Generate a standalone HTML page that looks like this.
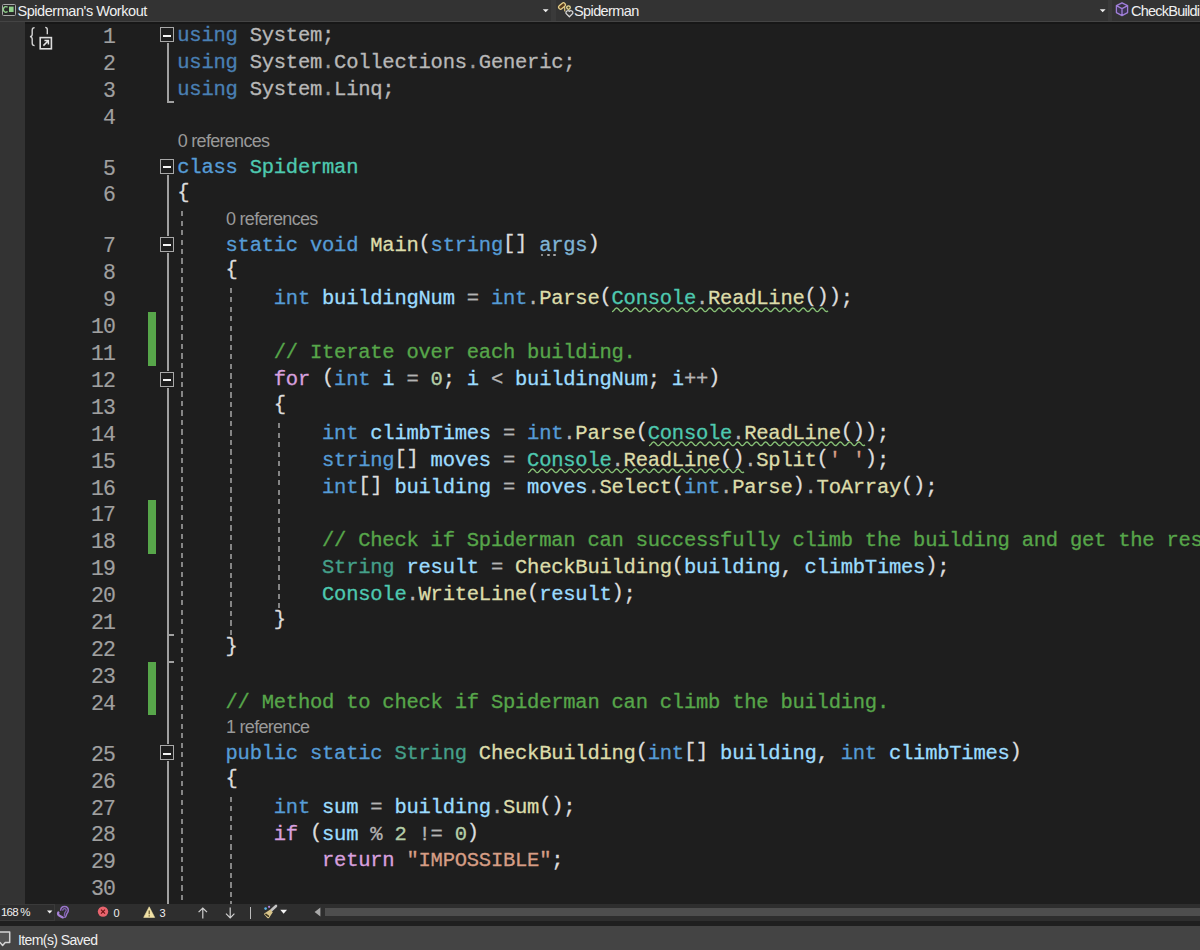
<!DOCTYPE html>
<html><head><meta charset="utf-8"><style>
*{margin:0;padding:0;box-sizing:border-box}
html,body{width:1200px;height:950px;overflow:hidden;background:#1e1e1e}
body{position:relative;font-family:"Liberation Sans",sans-serif}
.a{position:absolute}
.code{position:absolute;left:177.30px;font-family:"Liberation Mono",monospace;font-size:20.50px;letter-spacing:-0.240px;white-space:pre;line-height:26.90px;height:26.90px;-webkit-text-stroke:0.30px currentColor}
.ln{position:absolute;left:59px;width:56.00px;text-align:right;font-family:"Liberation Mono",monospace;font-size:21.50px;letter-spacing:-0.840px;white-space:pre;line-height:26.90px;color:#a0a0a0;-webkit-text-stroke:0.15px currentColor}
.cl{position:absolute;font-family:"Liberation Sans",sans-serif;font-size:18px;color:#999999;white-space:pre;letter-spacing:-0.7px;line-height:20px;height:20px}
.k{color:#569CD6}.c{color:#D8A0DF}.t{color:#4EC9B0}.m{color:#DCDCAA}.v{color:#9CDCFE}.s{color:#D69D85}.n{color:#B5CEA8}.g{color:#57A64A}.p{color:#DCDCDC}.o{color:#B4B4B4}.ns{color:#DCDCDC}.pa{color:#80b4d4}.tf{color:#45a08a}
.br{position:relative;top:-2px}
.u .k{color:#4a80b4}.u .ns,.u .p{color:#b8b8b8}.u .o{color:#9a9a9a}
.fold{position:absolute;left:159.6px;width:14.6px;height:15px;border:1.8px solid #a8a8a8;background:#1e1e1e}
.fold:after{content:"";position:absolute;left:2.2px;top:6.4px;width:8.2px;height:2px;background:#f4f4f4}
.vl{position:absolute;left:167px;width:2px;background:#a0a0a0}
.tick{position:absolute;left:167px;width:7px;height:2px;background:#a0a0a0}
.gb{position:absolute;left:148px;width:8px;background:#57A64A}
.guide{position:absolute;width:2px;background:repeating-linear-gradient(to bottom,#858585 0,#858585 5px,transparent 5px,transparent 9.5px)}
</style></head><body>

<div class="a" style="left:0;top:22px;width:25px;height:882px;background:#333333"></div>
<div class="ln" style="top:23.83px">1</div>
<div class="code u" style="top:22.99px"><span class="k">using</span><span class="p"> </span><span class="ns">System</span><span class="p">;</span></div>
<div class="ln" style="top:50.73px">2</div>
<div class="code u" style="top:49.89px"><span class="k">using</span><span class="p"> </span><span class="ns">System</span><span class="o">.</span><span class="ns">Collections</span><span class="o">.</span><span class="ns">Generic</span><span class="p">;</span></div>
<div class="ln" style="top:77.63px">3</div>
<div class="code u" style="top:76.79px"><span class="k">using</span><span class="p"> </span><span class="ns">System</span><span class="o">.</span><span class="ns">Linq</span><span class="p">;</span></div>
<div class="ln" style="top:104.53px">4</div>
<div class="ln" style="top:155.53px">5</div>
<div class="code" style="top:154.69px"><span class="k">class</span><span class="p"> </span><span class="t">Spiderman</span></div>
<div class="cl" style="left:177.70px;top:130.96px">0 references</div>
<div class="ln" style="top:182.43px">6</div>
<div class="code" style="top:181.59px"><span class="p"><span class="br">{</span></span></div>
<div class="ln" style="top:233.43px">7</div>
<div class="code" style="top:232.59px"><span class="p">    </span><span class="k">static</span><span class="p"> </span><span class="k">void</span><span class="p"> </span><span class="m">Main</span><span class="p"><span class="br">(</span></span><span class="k">string</span><span class="p"><span class="br">[</span><span class="br">]</span> </span><span class="pa">args</span><span class="p"><span class="br">)</span></span></div>
<div class="cl" style="left:225.94px;top:208.86px">0 references</div>
<div class="ln" style="top:260.33px">8</div>
<div class="code" style="top:259.49px"><span class="p">    <span class="br">{</span></span></div>
<div class="ln" style="top:287.23px">9</div>
<div class="code" style="top:286.39px"><span class="p">        </span><span class="k">int</span><span class="p"> </span><span class="v">buildingNum</span><span class="p"> </span><span class="o">=</span><span class="p"> </span><span class="k">int</span><span class="o">.</span><span class="m">Parse</span><span class="p"><span class="br">(</span></span><span class="t">Console</span><span class="o">.</span><span class="m">ReadLine</span><span class="p"><span class="br">(</span><span class="br">)</span><span class="br">)</span>;</span></div>
<div class="ln" style="top:314.13px">10</div>
<div class="ln" style="top:341.03px">11</div>
<div class="code" style="top:340.19px"><span class="p">        </span><span class="g">// Iterate over each building.</span></div>
<div class="ln" style="top:367.93px">12</div>
<div class="code" style="top:367.09px"><span class="p">        </span><span class="c">for</span><span class="p"> <span class="br">(</span></span><span class="k">int</span><span class="p"> </span><span class="v">i</span><span class="p"> </span><span class="o">=</span><span class="p"> </span><span class="n">0</span><span class="p">; </span><span class="v">i</span><span class="p"> </span><span class="o">&lt;</span><span class="p"> </span><span class="v">buildingNum</span><span class="p">; </span><span class="v">i</span><span class="o">++</span><span class="p"><span class="br">)</span></span></div>
<div class="ln" style="top:394.83px">13</div>
<div class="code" style="top:393.99px"><span class="p">        <span class="br">{</span></span></div>
<div class="ln" style="top:421.73px">14</div>
<div class="code" style="top:420.89px"><span class="p">            </span><span class="k">int</span><span class="p"> </span><span class="v">climbTimes</span><span class="p"> </span><span class="o">=</span><span class="p"> </span><span class="k">int</span><span class="o">.</span><span class="m">Parse</span><span class="p"><span class="br">(</span></span><span class="t">Console</span><span class="o">.</span><span class="m">ReadLine</span><span class="p"><span class="br">(</span><span class="br">)</span><span class="br">)</span>;</span></div>
<div class="ln" style="top:448.63px">15</div>
<div class="code" style="top:447.79px"><span class="p">            </span><span class="k">string</span><span class="p"><span class="br">[</span><span class="br">]</span> </span><span class="v">moves</span><span class="p"> </span><span class="o">=</span><span class="p"> </span><span class="t">Console</span><span class="o">.</span><span class="m">ReadLine</span><span class="p"><span class="br">(</span><span class="br">)</span></span><span class="o">.</span><span class="m">Split</span><span class="p"><span class="br">(</span></span><span class="s">&#x27; &#x27;</span><span class="p"><span class="br">)</span>;</span></div>
<div class="ln" style="top:475.53px">16</div>
<div class="code" style="top:474.69px"><span class="p">            </span><span class="k">int</span><span class="p"><span class="br">[</span><span class="br">]</span> </span><span class="v">building</span><span class="p"> </span><span class="o">=</span><span class="p"> </span><span class="v">moves</span><span class="o">.</span><span class="m">Select</span><span class="p"><span class="br">(</span></span><span class="k">int</span><span class="o">.</span><span class="m">Parse</span><span class="p"><span class="br">)</span></span><span class="o">.</span><span class="m">ToArray</span><span class="p"><span class="br">(</span><span class="br">)</span>;</span></div>
<div class="ln" style="top:502.43px">17</div>
<div class="ln" style="top:529.33px">18</div>
<div class="code" style="top:528.49px"><span class="p">            </span><span class="g">// Check if Spiderman can successfully climb the building and get the result.</span></div>
<div class="ln" style="top:556.23px">19</div>
<div class="code" style="top:555.39px"><span class="p">            </span><span class="tf">String</span><span class="p"> </span><span class="v">result</span><span class="p"> </span><span class="o">=</span><span class="p"> </span><span class="m">CheckBuilding</span><span class="p"><span class="br">(</span></span><span class="v">building</span><span class="p">, </span><span class="v">climbTimes</span><span class="p"><span class="br">)</span>;</span></div>
<div class="ln" style="top:583.13px">20</div>
<div class="code" style="top:582.29px"><span class="p">            </span><span class="t">Console</span><span class="o">.</span><span class="m">WriteLine</span><span class="p"><span class="br">(</span></span><span class="v">result</span><span class="p"><span class="br">)</span>;</span></div>
<div class="ln" style="top:610.03px">21</div>
<div class="code" style="top:609.19px"><span class="p">        <span class="br">}</span></span></div>
<div class="ln" style="top:636.93px">22</div>
<div class="code" style="top:636.09px"><span class="p">    <span class="br">}</span></span></div>
<div class="ln" style="top:663.83px">23</div>
<div class="ln" style="top:690.73px">24</div>
<div class="code" style="top:689.89px"><span class="p">    </span><span class="g">// Method to check if Spiderman can climb the building.</span></div>
<div class="ln" style="top:741.73px">25</div>
<div class="code" style="top:740.89px"><span class="p">    </span><span class="k">public</span><span class="p"> </span><span class="k">static</span><span class="p"> </span><span class="tf">String</span><span class="p"> </span><span class="m">CheckBuilding</span><span class="p"><span class="br">(</span></span><span class="k">int</span><span class="p"><span class="br">[</span><span class="br">]</span> </span><span class="v">building</span><span class="p">, </span><span class="k">int</span><span class="p"> </span><span class="v">climbTimes</span><span class="p"><span class="br">)</span></span></div>
<div class="cl" style="left:225.94px;top:717.16px">1 reference</div>
<div class="ln" style="top:768.63px">26</div>
<div class="code" style="top:767.79px"><span class="p">    <span class="br">{</span></span></div>
<div class="ln" style="top:795.53px">27</div>
<div class="code" style="top:794.69px"><span class="p">        </span><span class="k">int</span><span class="p"> </span><span class="v">sum</span><span class="p"> </span><span class="o">=</span><span class="p"> </span><span class="v">building</span><span class="o">.</span><span class="m">Sum</span><span class="p"><span class="br">(</span><span class="br">)</span>;</span></div>
<div class="ln" style="top:822.43px">28</div>
<div class="code" style="top:821.59px"><span class="p">        </span><span class="c">if</span><span class="p"> <span class="br">(</span></span><span class="v">sum</span><span class="p"> </span><span class="o">%</span><span class="p"> </span><span class="n">2</span><span class="p"> </span><span class="o">!=</span><span class="p"> </span><span class="n">0</span><span class="p"><span class="br">)</span></span></div>
<div class="ln" style="top:849.33px">29</div>
<div class="code" style="top:848.49px"><span class="p">            </span><span class="c">return</span><span class="p"> </span><span class="s">&quot;IMPOSSIBLE&quot;</span><span class="p">;</span></div>
<div class="ln" style="top:876.23px">30</div>
<div class="fold" style="top:27.40px"></div>
<div class="fold" style="top:159.10px"></div>
<div class="fold" style="top:237.00px"></div>
<div class="fold" style="top:371.50px"></div>
<div class="fold" style="top:745.30px"></div>
<div class="gb" style="top:312.00px;height:53.80px"></div>
<div class="gb" style="top:500.30px;height:53.80px"></div>
<div class="gb" style="top:661.70px;height:53.80px"></div>
<div class="vl" style="top:43.40px;height:59.00px"></div>
<div class="tick" style="top:101.40px"></div>
<div class="vl" style="top:175.10px;height:60.90px"></div>
<div class="vl" style="top:253.00px;height:117.50px"></div>
<div class="vl" style="top:387.50px;height:356.80px"></div>
<div class="tick" style="top:633.80px"></div>
<div class="tick" style="top:660.70px"></div>
<div class="vl" style="top:761.30px;height:142.70px"></div>
<div class="guide" style="left:181.10px;top:210.50px;height:693.50px"></div>
<div class="guide" style="left:230.10px;top:288.00px;height:346.80px"></div>
<div class="guide" style="left:277.90px;top:422.50px;height:185.40px"></div>
<div class="guide" style="left:230.10px;top:796.70px;height:107.30px"></div>
<svg class="a" style="left:611.46px;top:306.80px" width="220" height="8"><polyline points="1.00,4.60 1.50,4.50 2.00,4.21 2.50,3.76 3.00,3.20 3.50,2.60 4.00,2.02 4.50,1.53 5.00,1.18 5.50,1.01 6.00,1.05 6.50,1.28 7.00,1.68 7.50,2.21 8.00,2.80 8.50,3.40 9.00,3.92 9.50,4.33 10.00,4.56 10.50,4.59 11.00,4.42 11.50,4.07 12.00,3.58 12.50,3.00 13.00,2.39 13.50,1.84 14.00,1.39 14.50,1.10 15.00,1.00 15.50,1.10 16.00,1.40 16.50,1.85 17.00,2.41 17.50,3.01 18.00,3.59 18.50,4.08 19.00,4.43 19.50,4.59 20.00,4.55 20.50,4.32 21.00,3.92 21.50,3.39 22.00,2.79 22.50,2.20 23.00,1.67 23.50,1.27 24.00,1.04 24.50,1.01 25.00,1.18 25.50,1.53 26.00,2.03 26.50,2.61 27.00,3.21 27.50,3.77 28.00,4.21 28.50,4.50 29.00,4.60 29.50,4.49 30.00,4.20 30.50,3.75 31.00,3.19 31.50,2.59 32.00,2.01 32.50,1.52 33.00,1.17 33.50,1.01 34.00,1.05 34.50,1.28 35.00,1.69 35.50,2.22 36.00,2.82 36.50,3.41 37.00,3.93 37.50,4.33 38.00,4.56 38.50,4.59 39.00,4.41 39.50,4.06 40.00,3.57 40.50,2.98 41.00,2.38 41.50,1.83 42.00,1.38 42.50,1.10 43.00,1.00 43.50,1.11 44.00,1.40 44.50,1.86 45.00,2.42 45.50,3.02 46.00,3.60 46.50,4.09 47.00,4.43 47.50,4.59 48.00,4.55 48.50,4.31 49.00,3.91 49.50,3.37 50.00,2.78 50.50,2.19 51.00,1.66 51.50,1.26 52.00,1.04 52.50,1.01 53.00,1.19 53.50,1.54 54.00,2.04 54.50,2.62 55.00,3.22 55.50,3.78 56.00,4.22 56.50,4.51 57.00,4.60 57.50,4.49 58.00,4.19 58.50,3.74 59.00,3.18 59.50,2.57 60.00,2.00 60.50,1.51 61.00,1.17 61.50,1.01 62.00,1.05 62.50,1.29 63.00,1.70 63.50,2.23 64.00,2.83 64.50,3.42 65.00,3.94 65.50,4.34 66.00,4.56 66.50,4.59 67.00,4.41 67.50,4.05 68.00,3.55 68.50,2.97 69.00,2.37 69.50,1.82 70.00,1.37 70.50,1.09 71.00,1.00 71.50,1.11 72.00,1.41 72.50,1.87 73.00,2.43 73.50,3.03 74.00,3.61 74.50,4.10 75.00,4.44 75.50,4.59 76.00,4.55 76.50,4.31 77.00,3.90 77.50,3.36 78.00,2.77 78.50,2.17 79.00,1.65 79.50,1.26 80.00,1.04 80.50,1.02 81.00,1.19 81.50,1.55 82.00,2.05 82.50,2.63 83.00,3.24 83.50,3.79 84.00,4.23 84.50,4.51 85.00,4.60 85.50,4.49 86.00,4.18 86.50,3.73 87.00,3.16 87.50,2.56 88.00,1.99 88.50,1.50 89.00,1.16 89.50,1.01 90.00,1.05 90.50,1.30 91.00,1.71 91.50,2.24 92.00,2.84 92.50,3.43 93.00,3.95 93.50,4.35 94.00,4.56 94.50,4.58 95.00,4.40 95.50,4.04 96.00,3.54 96.50,2.96 97.00,2.36 97.50,1.81 98.00,1.37 98.50,1.09 99.00,1.00 99.50,1.12 100.00,1.42 100.50,1.88 101.00,2.44 101.50,3.04 102.00,3.62 102.50,4.10 103.00,4.44 103.50,4.59 104.00,4.54 104.50,4.30 105.00,3.89 105.50,3.35 106.00,2.75 106.50,2.16 107.00,1.64 107.50,1.25 108.00,1.04 108.50,1.02 109.00,1.20 109.50,1.56 110.00,2.06 110.50,2.65 111.00,3.25 111.50,3.80 112.00,4.24 112.50,4.51 113.00,4.60 113.50,4.48 114.00,4.18 114.50,3.72 115.00,3.15 115.50,2.55 116.00,1.97 116.50,1.49 117.00,1.16 117.50,1.01 118.00,1.06 118.50,1.30 119.00,1.72 119.50,2.25 120.00,2.85 120.50,3.44 121.00,3.96 121.50,4.35 122.00,4.57 122.50,4.58 123.00,4.40 123.50,4.03 124.00,3.53 124.50,2.95 125.00,2.35 125.50,1.80 126.00,1.36 126.50,1.08 127.00,1.00 127.50,1.12 128.00,1.43 128.50,1.89 129.00,2.45 129.50,3.06 130.00,3.63 130.50,4.11 131.00,4.45 131.50,4.59 132.00,4.54 132.50,4.29 133.00,3.88 133.50,3.34 134.00,2.74 134.50,2.15 135.00,1.63 135.50,1.25 136.00,1.03 136.50,1.02 137.00,1.20 137.50,1.57 138.00,2.07 138.50,2.66 139.00,3.26 139.50,3.81 140.00,4.24 140.50,4.52 141.00,4.60 141.50,4.48 142.00,4.17 142.50,3.71 143.00,3.14 143.50,2.54 144.00,1.96 144.50,1.48 145.00,1.15 145.50,1.01 146.00,1.06 146.50,1.31 147.00,1.73 147.50,2.27 148.00,2.86 148.50,3.45 149.00,3.97 149.50,4.36 150.00,4.57 150.50,4.58 151.00,4.39 151.50,4.03 152.00,3.52 152.50,2.94 153.00,2.34 153.50,1.79 154.00,1.35 154.50,1.08 155.00,1.00 155.50,1.12 156.00,1.44 156.50,1.90 157.00,2.47 157.50,3.07 158.00,3.64 158.50,4.12 159.00,4.45 159.50,4.60 160.00,4.54 160.50,4.29 161.00,3.87 161.50,3.33 162.00,2.73 162.50,2.14 163.00,1.62 163.50,1.24 164.00,1.03 164.50,1.02 165.00,1.21 165.50,1.58 166.00,2.08 166.50,2.67 167.00,3.27 167.50,3.82 168.00,4.25 168.50,4.52 169.00,4.60 169.50,4.47 170.00,4.16 170.50,3.69 171.00,3.13 171.50,2.53 172.00,1.95 172.50,1.48 173.00,1.15 173.50,1.00 174.00,1.06 174.50,1.32 175.00,1.74 175.50,2.28 176.00,2.88 176.50,3.47 177.00,3.98 177.50,4.36 178.00,4.57 178.50,4.58 179.00,4.39 179.50,4.02 180.00,3.51 180.50,2.92 181.00,2.32 181.50,1.78 182.00,1.35 182.50,1.08 183.00,1.00 183.50,1.13 184.00,1.44 184.50,1.91 185.00,2.48 185.50,3.08 186.00,3.65 186.50,4.13 187.00,4.46 187.50,4.60 188.00,4.54 188.50,4.28 189.00,3.86 189.50,3.32 190.00,2.72 190.50,2.13 191.00,1.61 191.50,1.23 192.00,1.03 192.50,1.02 193.00,1.22 193.50,1.59 194.00,2.10 194.50,2.68 195.00,3.28 195.50,3.83 196.00,4.26 196.50,4.53 197.00,4.60 197.50,4.47 198.00,4.15 198.50,3.68 199.00,3.12 199.50,2.51 200.00,1.94 200.50,1.47 201.00,1.14 201.50,1.00 202.00,1.07 202.50,1.32 203.00,1.75 203.50,2.29 204.00,2.89 204.50,3.48 205.00,3.99 205.50,4.37 206.00,4.57 206.50,4.58 207.00,4.38 207.50,4.01 208.00,3.50 208.50,2.91 209.00,2.31 209.50,1.77 210.00,1.34 210.50,1.07 211.00,1.00 211.50,1.13 212.00,1.45 212.50,1.92 213.00,2.49 213.50,3.09 214.00,3.66 214.50,4.14 215.00,4.46 215.50,4.60 216.00,4.53 216.50,4.27 217.00,3.85" fill="none" stroke="#88c277" stroke-width="1.35" stroke-linejoin="round"/></svg>
<svg class="a" style="left:647.64px;top:441.30px" width="220" height="8"><polyline points="1.00,4.60 1.50,4.50 2.00,4.21 2.50,3.76 3.00,3.20 3.50,2.60 4.00,2.02 4.50,1.53 5.00,1.18 5.50,1.01 6.00,1.05 6.50,1.28 7.00,1.68 7.50,2.21 8.00,2.80 8.50,3.40 9.00,3.92 9.50,4.33 10.00,4.56 10.50,4.59 11.00,4.42 11.50,4.07 12.00,3.58 12.50,3.00 13.00,2.39 13.50,1.84 14.00,1.39 14.50,1.10 15.00,1.00 15.50,1.10 16.00,1.40 16.50,1.85 17.00,2.41 17.50,3.01 18.00,3.59 18.50,4.08 19.00,4.43 19.50,4.59 20.00,4.55 20.50,4.32 21.00,3.92 21.50,3.39 22.00,2.79 22.50,2.20 23.00,1.67 23.50,1.27 24.00,1.04 24.50,1.01 25.00,1.18 25.50,1.53 26.00,2.03 26.50,2.61 27.00,3.21 27.50,3.77 28.00,4.21 28.50,4.50 29.00,4.60 29.50,4.49 30.00,4.20 30.50,3.75 31.00,3.19 31.50,2.59 32.00,2.01 32.50,1.52 33.00,1.17 33.50,1.01 34.00,1.05 34.50,1.28 35.00,1.69 35.50,2.22 36.00,2.82 36.50,3.41 37.00,3.93 37.50,4.33 38.00,4.56 38.50,4.59 39.00,4.41 39.50,4.06 40.00,3.57 40.50,2.98 41.00,2.38 41.50,1.83 42.00,1.38 42.50,1.10 43.00,1.00 43.50,1.11 44.00,1.40 44.50,1.86 45.00,2.42 45.50,3.02 46.00,3.60 46.50,4.09 47.00,4.43 47.50,4.59 48.00,4.55 48.50,4.31 49.00,3.91 49.50,3.37 50.00,2.78 50.50,2.19 51.00,1.66 51.50,1.26 52.00,1.04 52.50,1.01 53.00,1.19 53.50,1.54 54.00,2.04 54.50,2.62 55.00,3.22 55.50,3.78 56.00,4.22 56.50,4.51 57.00,4.60 57.50,4.49 58.00,4.19 58.50,3.74 59.00,3.18 59.50,2.57 60.00,2.00 60.50,1.51 61.00,1.17 61.50,1.01 62.00,1.05 62.50,1.29 63.00,1.70 63.50,2.23 64.00,2.83 64.50,3.42 65.00,3.94 65.50,4.34 66.00,4.56 66.50,4.59 67.00,4.41 67.50,4.05 68.00,3.55 68.50,2.97 69.00,2.37 69.50,1.82 70.00,1.37 70.50,1.09 71.00,1.00 71.50,1.11 72.00,1.41 72.50,1.87 73.00,2.43 73.50,3.03 74.00,3.61 74.50,4.10 75.00,4.44 75.50,4.59 76.00,4.55 76.50,4.31 77.00,3.90 77.50,3.36 78.00,2.77 78.50,2.17 79.00,1.65 79.50,1.26 80.00,1.04 80.50,1.02 81.00,1.19 81.50,1.55 82.00,2.05 82.50,2.63 83.00,3.24 83.50,3.79 84.00,4.23 84.50,4.51 85.00,4.60 85.50,4.49 86.00,4.18 86.50,3.73 87.00,3.16 87.50,2.56 88.00,1.99 88.50,1.50 89.00,1.16 89.50,1.01 90.00,1.05 90.50,1.30 91.00,1.71 91.50,2.24 92.00,2.84 92.50,3.43 93.00,3.95 93.50,4.35 94.00,4.56 94.50,4.58 95.00,4.40 95.50,4.04 96.00,3.54 96.50,2.96 97.00,2.36 97.50,1.81 98.00,1.37 98.50,1.09 99.00,1.00 99.50,1.12 100.00,1.42 100.50,1.88 101.00,2.44 101.50,3.04 102.00,3.62 102.50,4.10 103.00,4.44 103.50,4.59 104.00,4.54 104.50,4.30 105.00,3.89 105.50,3.35 106.00,2.75 106.50,2.16 107.00,1.64 107.50,1.25 108.00,1.04 108.50,1.02 109.00,1.20 109.50,1.56 110.00,2.06 110.50,2.65 111.00,3.25 111.50,3.80 112.00,4.24 112.50,4.51 113.00,4.60 113.50,4.48 114.00,4.18 114.50,3.72 115.00,3.15 115.50,2.55 116.00,1.97 116.50,1.49 117.00,1.16 117.50,1.01 118.00,1.06 118.50,1.30 119.00,1.72 119.50,2.25 120.00,2.85 120.50,3.44 121.00,3.96 121.50,4.35 122.00,4.57 122.50,4.58 123.00,4.40 123.50,4.03 124.00,3.53 124.50,2.95 125.00,2.35 125.50,1.80 126.00,1.36 126.50,1.08 127.00,1.00 127.50,1.12 128.00,1.43 128.50,1.89 129.00,2.45 129.50,3.06 130.00,3.63 130.50,4.11 131.00,4.45 131.50,4.59 132.00,4.54 132.50,4.29 133.00,3.88 133.50,3.34 134.00,2.74 134.50,2.15 135.00,1.63 135.50,1.25 136.00,1.03 136.50,1.02 137.00,1.20 137.50,1.57 138.00,2.07 138.50,2.66 139.00,3.26 139.50,3.81 140.00,4.24 140.50,4.52 141.00,4.60 141.50,4.48 142.00,4.17 142.50,3.71 143.00,3.14 143.50,2.54 144.00,1.96 144.50,1.48 145.00,1.15 145.50,1.01 146.00,1.06 146.50,1.31 147.00,1.73 147.50,2.27 148.00,2.86 148.50,3.45 149.00,3.97 149.50,4.36 150.00,4.57 150.50,4.58 151.00,4.39 151.50,4.03 152.00,3.52 152.50,2.94 153.00,2.34 153.50,1.79 154.00,1.35 154.50,1.08 155.00,1.00 155.50,1.12 156.00,1.44 156.50,1.90 157.00,2.47 157.50,3.07 158.00,3.64 158.50,4.12 159.00,4.45 159.50,4.60 160.00,4.54 160.50,4.29 161.00,3.87 161.50,3.33 162.00,2.73 162.50,2.14 163.00,1.62 163.50,1.24 164.00,1.03 164.50,1.02 165.00,1.21 165.50,1.58 166.00,2.08 166.50,2.67 167.00,3.27 167.50,3.82 168.00,4.25 168.50,4.52 169.00,4.60 169.50,4.47 170.00,4.16 170.50,3.69 171.00,3.13 171.50,2.53 172.00,1.95 172.50,1.48 173.00,1.15 173.50,1.00 174.00,1.06 174.50,1.32 175.00,1.74 175.50,2.28 176.00,2.88 176.50,3.47 177.00,3.98 177.50,4.36 178.00,4.57 178.50,4.58 179.00,4.39 179.50,4.02 180.00,3.51 180.50,2.92 181.00,2.32 181.50,1.78 182.00,1.35 182.50,1.08 183.00,1.00 183.50,1.13 184.00,1.44 184.50,1.91 185.00,2.48 185.50,3.08 186.00,3.65 186.50,4.13 187.00,4.46 187.50,4.60 188.00,4.54 188.50,4.28 189.00,3.86 189.50,3.32 190.00,2.72 190.50,2.13 191.00,1.61 191.50,1.23 192.00,1.03 192.50,1.02 193.00,1.22 193.50,1.59 194.00,2.10 194.50,2.68 195.00,3.28 195.50,3.83 196.00,4.26 196.50,4.53 197.00,4.60 197.50,4.47 198.00,4.15 198.50,3.68 199.00,3.12 199.50,2.51 200.00,1.94 200.50,1.47 201.00,1.14 201.50,1.00 202.00,1.07 202.50,1.32 203.00,1.75 203.50,2.29 204.00,2.89 204.50,3.48 205.00,3.99 205.50,4.37 206.00,4.57 206.50,4.58 207.00,4.38 207.50,4.01 208.00,3.50 208.50,2.91 209.00,2.31 209.50,1.77 210.00,1.34 210.50,1.07 211.00,1.00 211.50,1.13 212.00,1.45 212.50,1.92 213.00,2.49 213.50,3.09 214.00,3.66 214.50,4.14 215.00,4.46 215.50,4.60 216.00,4.53 216.50,4.27 217.00,3.85" fill="none" stroke="#88c277" stroke-width="1.35" stroke-linejoin="round"/></svg>
<svg class="a" style="left:527.04px;top:468.20px" width="220" height="8"><polyline points="1.00,4.60 1.50,4.50 2.00,4.21 2.50,3.76 3.00,3.20 3.50,2.60 4.00,2.02 4.50,1.53 5.00,1.18 5.50,1.01 6.00,1.05 6.50,1.28 7.00,1.68 7.50,2.21 8.00,2.80 8.50,3.40 9.00,3.92 9.50,4.33 10.00,4.56 10.50,4.59 11.00,4.42 11.50,4.07 12.00,3.58 12.50,3.00 13.00,2.39 13.50,1.84 14.00,1.39 14.50,1.10 15.00,1.00 15.50,1.10 16.00,1.40 16.50,1.85 17.00,2.41 17.50,3.01 18.00,3.59 18.50,4.08 19.00,4.43 19.50,4.59 20.00,4.55 20.50,4.32 21.00,3.92 21.50,3.39 22.00,2.79 22.50,2.20 23.00,1.67 23.50,1.27 24.00,1.04 24.50,1.01 25.00,1.18 25.50,1.53 26.00,2.03 26.50,2.61 27.00,3.21 27.50,3.77 28.00,4.21 28.50,4.50 29.00,4.60 29.50,4.49 30.00,4.20 30.50,3.75 31.00,3.19 31.50,2.59 32.00,2.01 32.50,1.52 33.00,1.17 33.50,1.01 34.00,1.05 34.50,1.28 35.00,1.69 35.50,2.22 36.00,2.82 36.50,3.41 37.00,3.93 37.50,4.33 38.00,4.56 38.50,4.59 39.00,4.41 39.50,4.06 40.00,3.57 40.50,2.98 41.00,2.38 41.50,1.83 42.00,1.38 42.50,1.10 43.00,1.00 43.50,1.11 44.00,1.40 44.50,1.86 45.00,2.42 45.50,3.02 46.00,3.60 46.50,4.09 47.00,4.43 47.50,4.59 48.00,4.55 48.50,4.31 49.00,3.91 49.50,3.37 50.00,2.78 50.50,2.19 51.00,1.66 51.50,1.26 52.00,1.04 52.50,1.01 53.00,1.19 53.50,1.54 54.00,2.04 54.50,2.62 55.00,3.22 55.50,3.78 56.00,4.22 56.50,4.51 57.00,4.60 57.50,4.49 58.00,4.19 58.50,3.74 59.00,3.18 59.50,2.57 60.00,2.00 60.50,1.51 61.00,1.17 61.50,1.01 62.00,1.05 62.50,1.29 63.00,1.70 63.50,2.23 64.00,2.83 64.50,3.42 65.00,3.94 65.50,4.34 66.00,4.56 66.50,4.59 67.00,4.41 67.50,4.05 68.00,3.55 68.50,2.97 69.00,2.37 69.50,1.82 70.00,1.37 70.50,1.09 71.00,1.00 71.50,1.11 72.00,1.41 72.50,1.87 73.00,2.43 73.50,3.03 74.00,3.61 74.50,4.10 75.00,4.44 75.50,4.59 76.00,4.55 76.50,4.31 77.00,3.90 77.50,3.36 78.00,2.77 78.50,2.17 79.00,1.65 79.50,1.26 80.00,1.04 80.50,1.02 81.00,1.19 81.50,1.55 82.00,2.05 82.50,2.63 83.00,3.24 83.50,3.79 84.00,4.23 84.50,4.51 85.00,4.60 85.50,4.49 86.00,4.18 86.50,3.73 87.00,3.16 87.50,2.56 88.00,1.99 88.50,1.50 89.00,1.16 89.50,1.01 90.00,1.05 90.50,1.30 91.00,1.71 91.50,2.24 92.00,2.84 92.50,3.43 93.00,3.95 93.50,4.35 94.00,4.56 94.50,4.58 95.00,4.40 95.50,4.04 96.00,3.54 96.50,2.96 97.00,2.36 97.50,1.81 98.00,1.37 98.50,1.09 99.00,1.00 99.50,1.12 100.00,1.42 100.50,1.88 101.00,2.44 101.50,3.04 102.00,3.62 102.50,4.10 103.00,4.44 103.50,4.59 104.00,4.54 104.50,4.30 105.00,3.89 105.50,3.35 106.00,2.75 106.50,2.16 107.00,1.64 107.50,1.25 108.00,1.04 108.50,1.02 109.00,1.20 109.50,1.56 110.00,2.06 110.50,2.65 111.00,3.25 111.50,3.80 112.00,4.24 112.50,4.51 113.00,4.60 113.50,4.48 114.00,4.18 114.50,3.72 115.00,3.15 115.50,2.55 116.00,1.97 116.50,1.49 117.00,1.16 117.50,1.01 118.00,1.06 118.50,1.30 119.00,1.72 119.50,2.25 120.00,2.85 120.50,3.44 121.00,3.96 121.50,4.35 122.00,4.57 122.50,4.58 123.00,4.40 123.50,4.03 124.00,3.53 124.50,2.95 125.00,2.35 125.50,1.80 126.00,1.36 126.50,1.08 127.00,1.00 127.50,1.12 128.00,1.43 128.50,1.89 129.00,2.45 129.50,3.06 130.00,3.63 130.50,4.11 131.00,4.45 131.50,4.59 132.00,4.54 132.50,4.29 133.00,3.88 133.50,3.34 134.00,2.74 134.50,2.15 135.00,1.63 135.50,1.25 136.00,1.03 136.50,1.02 137.00,1.20 137.50,1.57 138.00,2.07 138.50,2.66 139.00,3.26 139.50,3.81 140.00,4.24 140.50,4.52 141.00,4.60 141.50,4.48 142.00,4.17 142.50,3.71 143.00,3.14 143.50,2.54 144.00,1.96 144.50,1.48 145.00,1.15 145.50,1.01 146.00,1.06 146.50,1.31 147.00,1.73 147.50,2.27 148.00,2.86 148.50,3.45 149.00,3.97 149.50,4.36 150.00,4.57 150.50,4.58 151.00,4.39 151.50,4.03 152.00,3.52 152.50,2.94 153.00,2.34 153.50,1.79 154.00,1.35 154.50,1.08 155.00,1.00 155.50,1.12 156.00,1.44 156.50,1.90 157.00,2.47 157.50,3.07 158.00,3.64 158.50,4.12 159.00,4.45 159.50,4.60 160.00,4.54 160.50,4.29 161.00,3.87 161.50,3.33 162.00,2.73 162.50,2.14 163.00,1.62 163.50,1.24 164.00,1.03 164.50,1.02 165.00,1.21 165.50,1.58 166.00,2.08 166.50,2.67 167.00,3.27 167.50,3.82 168.00,4.25 168.50,4.52 169.00,4.60 169.50,4.47 170.00,4.16 170.50,3.69 171.00,3.13 171.50,2.53 172.00,1.95 172.50,1.48 173.00,1.15 173.50,1.00 174.00,1.06 174.50,1.32 175.00,1.74 175.50,2.28 176.00,2.88 176.50,3.47 177.00,3.98 177.50,4.36 178.00,4.57 178.50,4.58 179.00,4.39 179.50,4.02 180.00,3.51 180.50,2.92 181.00,2.32 181.50,1.78 182.00,1.35 182.50,1.08 183.00,1.00 183.50,1.13 184.00,1.44 184.50,1.91 185.00,2.48 185.50,3.08 186.00,3.65 186.50,4.13 187.00,4.46 187.50,4.60 188.00,4.54 188.50,4.28 189.00,3.86 189.50,3.32 190.00,2.72 190.50,2.13 191.00,1.61 191.50,1.23 192.00,1.03 192.50,1.02 193.00,1.22 193.50,1.59 194.00,2.10 194.50,2.68 195.00,3.28 195.50,3.83 196.00,4.26 196.50,4.53 197.00,4.60 197.50,4.47 198.00,4.15 198.50,3.68 199.00,3.12 199.50,2.51 200.00,1.94 200.50,1.47 201.00,1.14 201.50,1.00 202.00,1.07 202.50,1.32 203.00,1.75 203.50,2.29 204.00,2.89 204.50,3.48 205.00,3.99 205.50,4.37 206.00,4.57 206.50,4.58 207.00,4.38 207.50,4.01 208.00,3.50 208.50,2.91 209.00,2.31 209.50,1.77 210.00,1.34 210.50,1.07 211.00,1.00 211.50,1.13 212.00,1.45 212.50,1.92 213.00,2.49 213.50,3.09 214.00,3.66 214.50,4.14 215.00,4.46 215.50,4.60 216.00,4.53 216.50,4.27 217.00,3.85" fill="none" stroke="#88c277" stroke-width="1.35" stroke-linejoin="round"/></svg>
<div class="a" style="left:540.70px;top:253.70px;width:2.6px;height:2.6px;border-radius:50%;background:#a8a8a8"></div>
<div class="a" style="left:547.00px;top:253.70px;width:2.6px;height:2.6px;border-radius:50%;background:#a8a8a8"></div>
<div class="a" style="left:553.30px;top:253.70px;width:2.6px;height:2.6px;border-radius:50%;background:#a8a8a8"></div>
<div class="a" style="left:0;top:0;width:1200px;height:21px;background:#333333"></div>
<div class="a" style="left:551px;top:0;width:5px;height:21px;background:#3a3a3a"></div>
<div class="a" style="left:1108px;top:0;width:4px;height:21px;background:#3a3a3a"></div>
<div class="a" style="left:0;top:21px;width:1200px;height:1px;background:#444444"></div>
<div class="a" style="left:25px;top:22px;width:1175px;height:1.5px;background:#171717"></div>
<div class="a" style="left:2px;top:3.5px;width:13.5px;height:12px;border:1.3px solid #a8a8a8;border-radius:1.5px;background:#2a2a2a"></div>
<svg class="a" style="left:0;top:0" width="20" height="20"><path d="M7.6 7.3 A2.6 2.8 0 1 0 7.6 11.6" stroke="#8fd08a" stroke-width="1.4" fill="none"/><rect x="9" y="6.6" width="4.6" height="5.4" fill="#8fd08a"/></svg>
<div class="a" style="left:17.5px;top:1.8px;font-size:14.5px;line-height:19px;color:#f0f0f0;letter-spacing:-0.45px;white-space:pre">Spiderman's Workout</div>
<svg class="a" style="left:540px;top:6px" width="12" height="10"><path d="M2.8 3.2 L8.6 3.2 L5.7 6.3 Z" fill="#f0f0f0"/></svg>
<svg class="a" style="left:1096.5px;top:6px" width="12" height="10"><path d="M2.8 3.2 L8.6 3.2 L5.7 6.3 Z" fill="#f0f0f0"/></svg>
<svg class="a" style="left:556px;top:0" width="20" height="21"><rect x="2.2" y="4" width="7.6" height="4" rx="1.8" transform="rotate(-40 6 6)" stroke="#e6d08a" stroke-width="1.3" fill="#5a3c1c"/><path d="M8.6 7 L8.8 11.4" stroke="#d8c07c" stroke-width="1.3"/><circle cx="12.5" cy="7.6" r="1.8" stroke="#ecdc96" stroke-width="1.3" fill="#4a4020"/><path d="M13.4 16.8 L10 13.4 A2.1 2.1 0 0 1 13.4 11.2 A2.1 2.1 0 0 1 16.8 13.4 Z" stroke="#d8d8d8" stroke-width="1.3" fill="#383838" stroke-linejoin="round"/></svg>
<div class="a" style="left:574px;top:1.8px;font-size:14.5px;line-height:19px;color:#f0f0f0;letter-spacing:-0.6px;white-space:pre">Spiderman</div>
<svg class="a" style="left:1114px;top:0" width="18" height="21"><path d="M8 2.8 L13.6 5.6 L13.6 12.6 L8 15.6 L2.4 12.6 L2.4 5.6 Z M2.4 5.6 L8 8.6 L13.6 5.6 M8 8.6 L8 15.6" stroke="#a07ed8" stroke-width="1.3" fill="#3b3450" stroke-linejoin="round"/></svg>
<div class="a" style="left:1131px;top:1.8px;font-size:14.5px;line-height:19px;color:#f0f0f0;letter-spacing:-0.75px;white-space:pre">CheckBuilding</div>
<svg class="a" style="left:25px;top:22px" width="32" height="32"><path d="M9.6 5.6 Q7.2 5.6 7.2 8.2 L7.2 12.2 Q7.2 14.3 5 14.6 Q7.2 14.9 7.2 17 L7.2 21 Q7.2 23.6 9.6 23.6" stroke="#d4d4d4" stroke-width="1.4" fill="none"/><path d="M20.2 5.4 Q22.3 5.4 22.3 7.6 L22.3 12.2" stroke="#d4d4d4" stroke-width="1.4" fill="none"/><rect x="15.2" y="15.6" width="11.2" height="11.2" stroke="#dcdcdc" stroke-width="1.6" fill="#1e1e1e"/><path d="M18.4 23.6 L23.2 18.8 M19.4 18.6 L23.4 18.6 L23.4 22.6" stroke="#e4e4e4" stroke-width="1.5" fill="none"/></svg>
<div class="a" style="left:0;top:904px;width:1200px;height:17px;background:#2e2e2e"></div>
<div class="a" style="left:0;top:904px;width:55px;height:17px;border:1px solid #3a3a3a;border-left:none;background:#2e2e2e"></div>
<div class="a" style="left:1px;top:904.7px;font-size:11.5px;line-height:15px;color:#f0f0f0;letter-spacing:-0.8px;white-space:pre">168 %</div>
<svg class="a" style="left:44px;top:907px" width="12" height="10"><path d="M3 3.5 L8.4 3.5 L5.7 6.5 Z" fill="#f0f0f0"/></svg>
<svg class="a" style="left:52px;top:902px" width="22" height="20"><path d="M8.6 8.8 C8.6 5.8 10.6 4.4 12.6 4.4 C14.8 4.4 16.3 6 16.3 8.2 C16.3 10.4 14.9 11.2 14.4 12.8 C14.1 14.2 13.6 15.3 12.2 15.3" stroke="#9874c8" stroke-width="1.5" fill="none"/><path d="M10.7 8.8 C10.7 7.4 11.5 6.6 12.5 6.6 C13.6 6.6 14.2 7.4 14.2 8.3 C14.2 9.4 13.2 9.9 12.8 10.7 L12.3 13.8" stroke="#7e5fb0" stroke-width="1.3" fill="none"/><path d="M6.4 10.4 C5.6 11.8 6.2 13.2 7.6 13.7 L10.8 15.4" stroke="#a681d6" stroke-width="2.3" fill="none" stroke-linecap="round"/></svg>
<svg class="a" style="left:96px;top:904px" width="14" height="15"><circle cx="7" cy="7.6" r="5.2" fill="#e8646e"/><path d="M5 5.6 L9 9.6 M9 5.6 L5 9.6" stroke="#6a1010" stroke-width="1.1"/></svg>
<div class="a" style="left:113.5px;top:906px;font-size:11px;line-height:14px;color:#f0f0f0;white-space:pre">0</div>
<svg class="a" style="left:142px;top:904px" width="15" height="15"><path d="M7.2 2.8 L12.7 13.4 L1.7 13.4 Z" fill="#f0e1a6" stroke="#f0e1a6" stroke-width="0.6" stroke-linejoin="round"/><path d="M7.2 6.4 L7.2 10.2 M7.2 11.2 L7.2 12.4" stroke="#5a4a20" stroke-width="1.1"/></svg>
<div class="a" style="left:159.5px;top:906px;font-size:11px;line-height:14px;color:#f0f0f0;white-space:pre">3</div>
<svg class="a" style="left:195px;top:904px" width="44" height="17"><path d="M7.8 14.4 L7.8 4 M3.6 8.2 L7.8 4 L12 8.2" stroke="#d0d0d0" stroke-width="1.2" fill="none"/><path d="M35.2 3.4 L35.2 13.8 M31 9.6 L35.2 13.8 L39.4 9.6" stroke="#d0d0d0" stroke-width="1.2" fill="none"/></svg>
<div class="a" style="left:250px;top:907px;width:1px;height:12px;background:#bbbbbb"></div>
<svg class="a" style="left:255px;top:902px" width="36" height="20"><path d="M21 4 L16.4 8.2" stroke="#c4c4c4" stroke-width="2.6" stroke-linecap="round"/><path d="M15.3 7.6 L17.8 10.2 L14 16 Q13.2 16.6 12.4 16 L9.2 12.6 Q8.8 11.6 9.6 11.2 Z" fill="#d8c48a"/><path d="M10.9 12.4 L13.3 14.2" stroke="#3a3320" stroke-width="1.6" stroke-linecap="round"/><circle cx="10.6" cy="6.6" r="1.3" fill="#5ab4e8"/><circle cx="14.1" cy="4.8" r="1.1" fill="#b084e0"/><path d="M25.3 7.8 L32 7.8 L28.65 11.8 Z" fill="#f4f4f4"/></svg>
<svg class="a" style="left:312px;top:904px" width="10" height="17"><path d="M8.4 3.6 L8.4 12.4 L2.6 8 Z" fill="#a8a8a8"/></svg>
<div class="a" style="left:325px;top:908px;width:875px;height:8px;background:#4e4e4e"></div>
<div class="a" style="left:0;top:921px;width:1200px;height:5px;background:#1f1f1f"></div>
<div class="a" style="left:0;top:926px;width:1200px;height:24px;background:#444444"></div>
<svg class="a" style="left:0;top:926px" width="16" height="24"><path d="M-2 6 L9.7 6 L9.7 16.4 L5.2 16.4 L2.6 19.4 L0 16.4 L-2 16.4 Z" stroke="#d4d4d4" stroke-width="1.5" fill="#545454" stroke-linejoin="round"/></svg>
<div class="a" style="left:18px;top:931px;font-size:14px;line-height:18px;color:#f0f0f0;letter-spacing:-0.6px;white-space:pre">Item(s) Saved</div>
</body></html>
